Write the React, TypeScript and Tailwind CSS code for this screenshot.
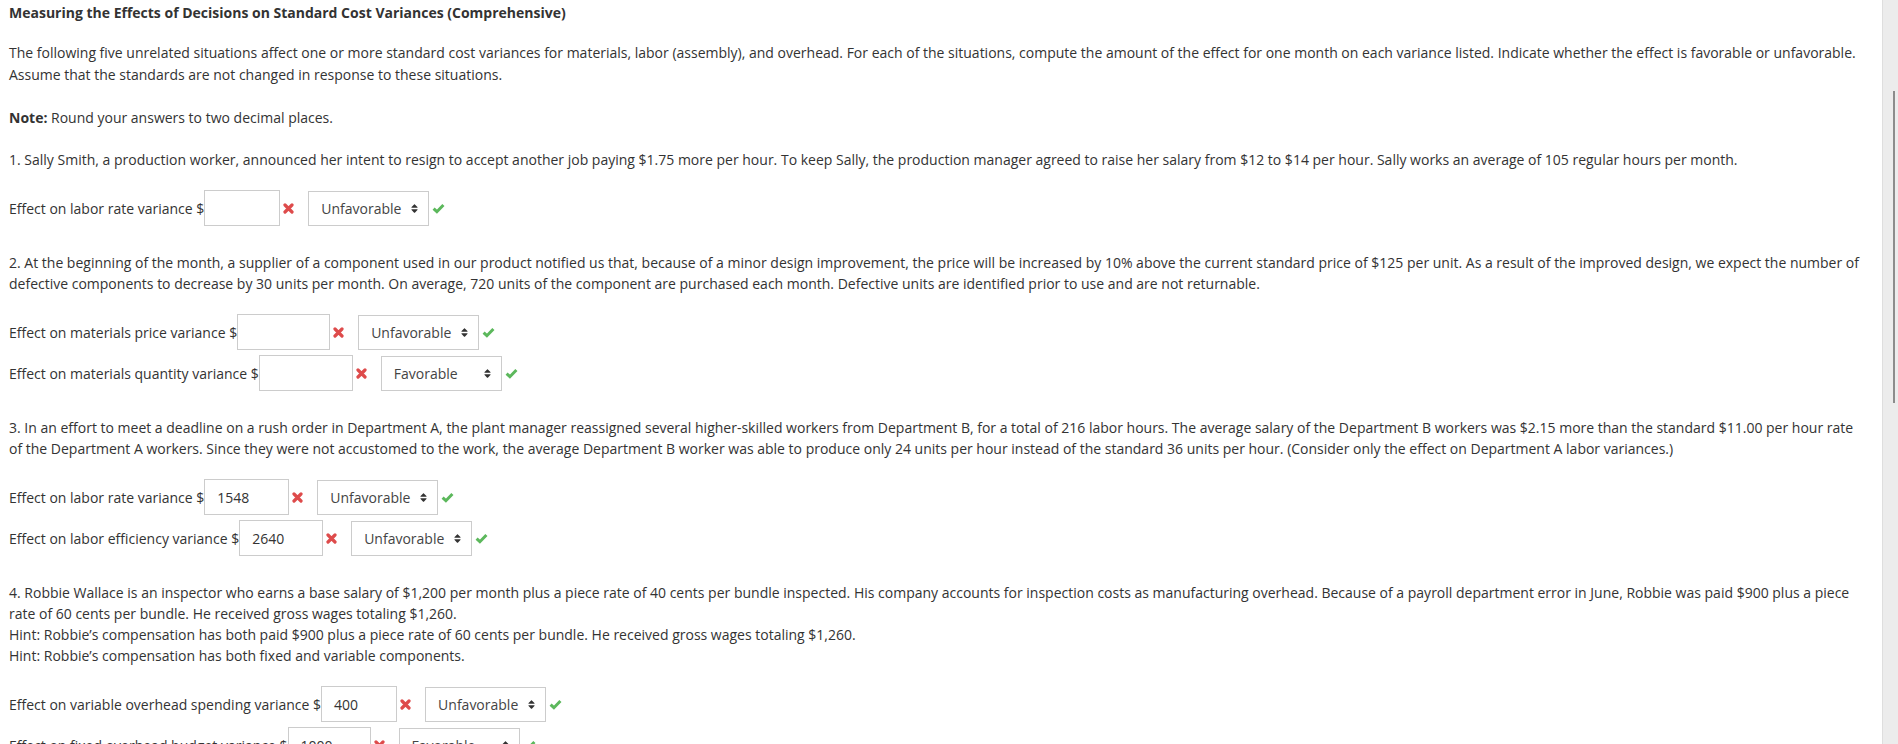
import { FaSort } from "react-icons/fa";

type Row = {
  label: string;
  value: string;
  width: number;
  choice: "Unfavorable" | "Favorable";
};

type Situation = {
  lines: string[];
  rows: Row[];
};

const situations: Situation[] = [
  {
    lines: [
      "1. Sally Smith, a production worker, announced her intent to resign to accept another job paying $1.75 more per hour. To keep Sally, the production manager agreed to raise her salary from $12 to $14 per hour. Sally works an average of 105 regular hours per month.",
    ],
    rows: [{ label: "Effect on labor rate variance $", value: "", width: 76, choice: "Unfavorable" }],
  },
  {
    lines: [
      "2. At the beginning of the month, a supplier of a component used in our product notified us that, because of a minor design improvement, the price will be increased by 10% above the current standard price of $125 per unit. As a result of the improved design, we expect the number of defective components to decrease by 30 units per month. On average, 720 units of the component are purchased each month. Defective units are identified prior to use and are not returnable.",
    ],
    rows: [
      { label: "Effect on materials price variance $", value: "", width: 93, choice: "Unfavorable" },
      { label: "Effect on materials quantity variance $", value: "", width: 94, choice: "Favorable" },
    ],
  },
  {
    lines: [
      "3. In an effort to meet a deadline on a rush order in Department A, the plant manager reassigned several higher-skilled workers from Department B, for a total of 216 labor hours. The average salary of the Department B workers was $2.15 more than the standard $11.00 per hour rate of the Department A workers. Since they were not accustomed to the work, the average Department B worker was able to produce only 24 units per hour instead of the standard 36 units per hour. (Consider only the effect on Department A labor variances.)",
    ],
    rows: [
      { label: "Effect on labor rate variance $", value: "1548", width: 85, choice: "Unfavorable" },
      { label: "Effect on labor efficiency variance $", value: "2640", width: 84, choice: "Unfavorable" },
    ],
  },
  {
    lines: [
      "4. Robbie Wallace is an inspector who earns a base salary of $1,200 per month plus a piece rate of 40 cents per bundle inspected. His company accounts for inspection costs as manufacturing overhead. Because of a payroll department error in June, Robbie was paid $900 plus a piece rate of 60 cents per bundle. He received gross wages totaling $1,260.",
      "Hint: Robbie\u2019s compensation has both paid $900 plus a piece rate of 60 cents per bundle. He received gross wages totaling $1,260.",
      "Hint: Robbie\u2019s compensation has both fixed and variable components.",
    ],
    rows: [
      { label: "Effect on variable overhead spending variance $", value: "400", width: 76, choice: "Unfavorable" },
      { label: "Effect on fixed overhead budget variance $", value: "1000", width: 83, choice: "Favorable" },
    ],
  },
];

function WrongMark() {
  return (
    <svg className="ml-[3px] shrink-0" width="11" height="11" viewBox="0 0 11 11">
      <path d="M2 2 L9 9 M9 2 L2 9" stroke="#de4b4b" strokeWidth="3.2" strokeLinecap="round" />
    </svg>
  );
}

function RightMark() {
  return (
    <svg className="ml-[3px] shrink-0" width="13" height="11" viewBox="0 0 13 11">
      <path d="M1.6 5.6 L4.9 8.7 L11.4 2" fill="none" stroke="#5cb85c" strokeWidth="3" />
    </svg>
  );
}

function AnswerRow({ row }: { row: Row }) {
  return (
    <div className="flex h-[36px] items-center">
      <span className="whitespace-nowrap">{row.label}</span>
      <div
        className="flex h-[36px] shrink-0 items-center border border-[#cccccc] bg-white pl-[12px] text-[#333333]"
        style={{ width: row.width }}
      >
        {row.value}
      </div>
      <WrongMark />
      <div className="ml-[14px] flex h-[35px] w-[121px] shrink-0 items-center justify-between border border-[#cccccc] bg-white pl-[12px] pr-[8px] text-[#444444]">
        <span>{row.choice}</span>
        <FaSort className="text-[#333333]" size={11} />
      </div>
      <RightMark />
    </div>
  );
}

export default function App() {
  return (
    <div className="flex h-[744px] w-full overflow-hidden bg-white font-['Open_Sans',sans-serif] text-[14px] text-[#333333]">
      <div className="min-w-0 flex-1 pl-[9px] pr-[18px] pt-[2px]">
        <h1 className="mb-[19px] text-[14px] font-bold leading-[21px]">
          Measuring the Effects of Decisions on Standard Cost Variances (Comprehensive)
        </h1>
        <p className="mb-[21px] leading-[22px]">
          The following five unrelated situations affect one or more standard cost variances for materials, labor
          (assembly), and overhead. For each of the situations, compute the amount of the effect for one month on each
          variance listed. Indicate whether the effect is favorable or unfavorable. Assume that the standards are not
          changed in response to these situations.
        </p>
        <p className="mb-[21px] leading-[21px]">
          <span className="font-bold">Note:</span> Round your answers to two decimal places.
        </p>
        {situations.map((s, i) => (
          <div key={i} className="mb-[26px]">
            <p className="mb-[20px] leading-[21px]">
              {s.lines.map((line, j) => (
                <span key={j}>
                  {line}
                  {j < s.lines.length - 1 ? <br /> : null}
                </span>
              ))}
            </p>
            <div className="flex flex-col gap-[5px]">
              {s.rows.map((r, k) => (
                <AnswerRow key={k} row={r} />
              ))}
            </div>
          </div>
        ))}
      </div>
      <div className="w-[16px] shrink-0 border-l border-[#dedede] bg-[#ececec] pl-[10px] pt-[91px]">
        <div className="h-[312px] w-[2px] bg-[#8c8c8c]" />
      </div>
    </div>
  );
}
